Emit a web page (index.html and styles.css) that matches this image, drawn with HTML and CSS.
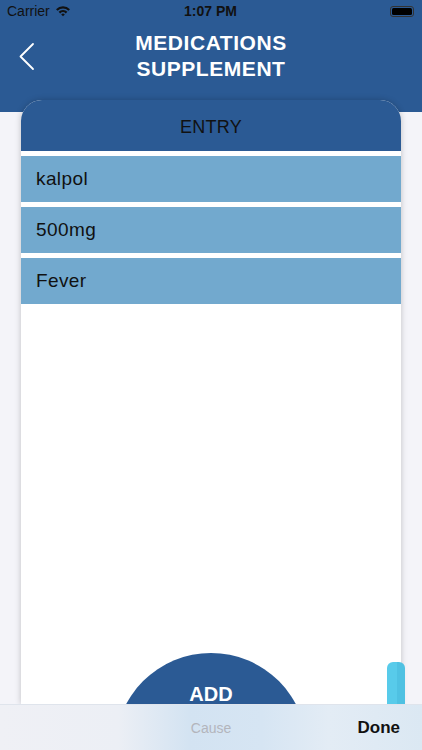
FILE: index.html
```html
<!DOCTYPE html>
<html>
<head>
<meta charset="utf-8">
<link rel="stylesheet" href="styles.css">
</head>
<body>
<div class="screen">
  <header class="topbar">
    <div class="status">
      <div class="status-left">
        <span>Carrier</span>
        <svg class="wifi" width="16" height="12" viewBox="0 0 16 12">
          <path d="M1 4.2 A10 10 0 0 1 15 4.2 L13.4 5.8 A7.7 7.7 0 0 0 2.6 5.8 Z" fill="#111"/>
          <path d="M3.6 6.8 A6.3 6.3 0 0 1 12.4 6.8 L10.8 8.4 A4 4 0 0 0 5.2 8.4 Z" fill="#111"/>
          <path d="M6.2 9.4 A2.6 2.6 0 0 1 9.8 9.4 L8 11.3 Z" fill="#111"/>
        </svg>
      </div>
      <div class="status-time">1:07 PM</div>
      <div class="status-right">
        <div class="battery"><div class="battery-fill"></div></div>
      </div>
    </div>
    <div class="nav">
      <svg class="back" width="18" height="30" viewBox="0 0 18 30">
        <path d="M15 2 L2.5 14.5 L15 27" fill="none" stroke="#fff" stroke-width="1.8" stroke-linecap="round" stroke-linejoin="round"/>
      </svg>
      <h1 class="title">MEDICATIONS<br>SUPPLEMENT</h1>
    </div>
  </header>

  <main class="content">
    <section class="card">
      <div class="card-head">ENTRY</div>
      <div class="rows">
        <div class="row">kalpol</div>
        <div class="row">500mg</div>
        <div class="row">Fever</div>
      </div>
      <div class="add-wrap">
        <div class="add-btn"><span>ADD</span></div>
      </div>
    </section>
    <div class="scroll-tab"></div>
  </main>

  <footer class="toolbar">
    <span class="tb-cause">Cause</span>
    <span class="tb-done">Done</span>
  </footer>
</div>
</body>
</html>
```

FILE: styles.css
```css
* { box-sizing: border-box; }
html, body { margin: 0; padding: 0; }
body {
  width: 422px;
  height: 750px;
  overflow: hidden;
  font-family: "Liberation Sans", Arial, sans-serif;
}
.screen {
  width: 422px;
  height: 750px;
  background: #f4f4f9;
  display: flex;
  flex-direction: column;
  overflow: hidden;
}
.topbar {
  background: #2b5a94;
  height: 112px;
  flex: none;
}
.status {
  height: 22px;
  display: flex;
  align-items: center;
  justify-content: space-between;
  padding: 0 8px 0 7px;
  color: #111;
  font-size: 14px;
}
.status-left {
  display: flex;
  align-items: center;
  gap: 5px;
  width: 100px;
}
.status-time {
  font-weight: bold;
  font-size: 14px;
}
.status-right {
  width: 100px;
  display: flex;
  justify-content: flex-end;
}
.battery {
  width: 24px;
  height: 11px;
  border: 1px solid #333;
  border-radius: 3px;
  padding: 1px;
}
.battery-fill {
  width: 100%;
  height: 100%;
  background: #000;
  border-radius: 1.5px;
}
.nav {
  height: 90px;
  display: grid;
  grid-template-columns: 50px 1fr 50px;
  align-items: start;
}
.back {
  margin: 20px 0 0 18px;
}
.title {
  margin: 8px 0 0 0;
  color: #fff;
  font-size: 21px;
  line-height: 26px;
  font-weight: bold;
  text-align: center;
  letter-spacing: 0.55px;
}
.content {
  flex: 1;
  position: relative;
  display: flex;
  flex-direction: column;
  min-height: 0;
}
.card {
  flex: 1;
  margin: -12px 21px 0 21px;
  background: #fff;
  border-radius: 21px 21px 0 0;
  box-shadow: 0 0 6px rgba(0, 0, 0, 0.22);
  display: flex;
  flex-direction: column;
  overflow: hidden;
}
.card-head {
  height: 51px;
  background: #2b5a94;
  color: #111;
  font-size: 18px;
  display: flex;
  align-items: center;
  justify-content: center;
  letter-spacing: 0.3px;
  padding-top: 3px;
}
.rows {
  display: flex;
  flex-direction: column;
  gap: 5px;
  padding-top: 5px;
}
.row {
  height: 46px;
  background: #72a9ce;
  color: #111;
  font-size: 19px;
  letter-spacing: 0.4px;
  display: flex;
  align-items: center;
  padding-left: 15px;
}
.add-wrap {
  margin-top: auto;
  height: 51px;
  overflow: hidden;
  display: flex;
  justify-content: center;
}
.add-btn {
  flex: none;
  width: 192px;
  height: 192px;
  border-radius: 50%;
  background: #2b5a94;
  color: #fff;
  font-weight: bold;
  font-size: 20px;
  display: flex;
  justify-content: center;
  padding-top: 30px;
}
.scroll-tab {
  position: absolute;
  right: 17px;
  bottom: 0;
  width: 18px;
  height: 42px;
  border-radius: 6px 6px 0 0;
  background: linear-gradient(to right, #58cbea 0 55%, #4fc1e2 55% 100%);
}
.toolbar {
  flex: none;
  height: 46px;
  position: relative;
  display: flex;
  align-items: center;
  justify-content: center;
  background: linear-gradient(to right, #eff0f5 0%, #eceff5 28%, #d3e3f2 45%, #d6e5f3 62%, #e3ecf5 78%, #dbe8f3 100%);
  border-top: 1px solid #dfe4ec;
}
.tb-cause {
  color: #b3b5bc;
  font-size: 14px;
}
.tb-done {
  position: absolute;
  right: 22px;
  font-weight: bold;
  font-size: 17px;
  color: #111;
}
```
